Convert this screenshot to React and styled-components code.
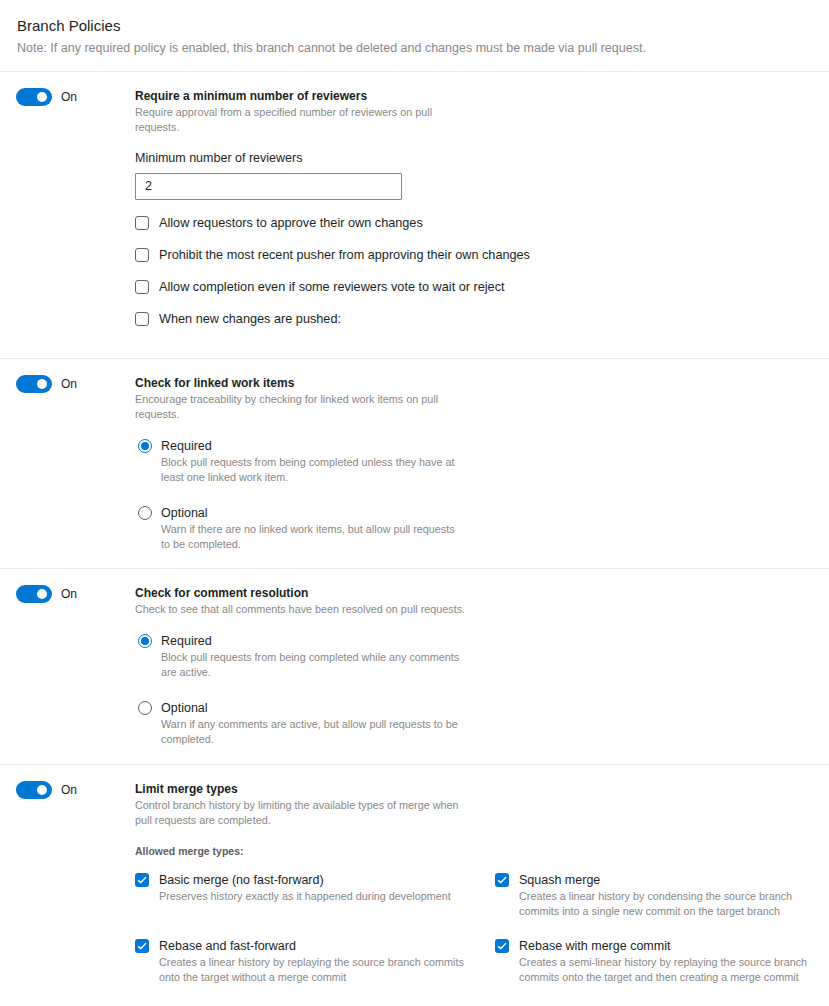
import React from 'react'
import styled, { createGlobalStyle } from 'styled-components'

const GlobalStyle = createGlobalStyle`
  body {
    margin: 0;
    background: #ffffff;
    font-family: "Liberation Sans", Arial, sans-serif;
    color: #323130;
  }
`

const Page = styled.div`
  width: 829px;
`

const Header = styled.div`
  padding: 16px 17px 14px;
  border-bottom: 1px solid #eaeaea;
`

const Title = styled.div`
  font-size: 15px;
  line-height: 20px;
  color: #201f1e;
`

const Note = styled.div`
  margin-top: 3px;
  font-size: 12.5px;
  line-height: 18px;
  color: #8a8886;
`

const Section = styled.div`
  display: flex;
  padding: 16px 0 ${p => p.bottom || 20}px;
  border-bottom: ${p => (p.last ? 'none' : '1px solid #eaeaea')};
`

const ToggleCol = styled.div`
  width: 135px;
  flex: none;
  padding-left: 16px;
  box-sizing: border-box;
  display: flex;
  align-items: flex-start;
  gap: 9px;
`

const Track = styled.div`
  width: 36px;
  height: 18px;
  border-radius: 9px;
  background: #0078d4;
  position: relative;
  flex: none;
  &::after {
    content: '';
    position: absolute;
    right: 5px;
    top: 4px;
    width: 10px;
    height: 10px;
    border-radius: 50%;
    background: #fff;
  }
`

const ToggleLabel = styled.span`
  font-size: 12px;
  line-height: 18px;
  color: #201f1e;
`

const Body = styled.div`
  flex: 1;
  min-width: 0;
`

const PolicyTitle = styled.div`
  font-size: 12px;
  font-weight: 700;
  line-height: 17px;
  color: #201f1e;
`

const Desc = styled.div`
  font-size: 10.8px;
  line-height: 15px;
  color: #8a8886;
  width: ${p => p.w || 320}px;
`

const FieldLabel = styled.div`
  margin-top: 14px;
  font-size: 12.5px;
  line-height: 18px;
  color: #201f1e;
`

const Input = styled.div`
  margin-top: 6px;
  width: 267px;
  height: 27px;
  box-sizing: border-box;
  border: 1px solid #8a8886;
  border-radius: 1px;
  padding: 0 9px;
  font-size: 12.5px;
  line-height: 25px;
  color: #201f1e;
`

const CheckList = styled.div`
  margin-top: 14px;
  display: flex;
  flex-direction: column;
  gap: 14px;
`

const CheckRow = styled.div`
  display: flex;
  align-items: center;
  gap: 10px;
  height: 18px;
  font-size: 12.7px;
  color: #201f1e;
`

const Box = styled.span`
  width: 14px;
  height: 14px;
  box-sizing: border-box;
  border-radius: 3px;
  flex: none;
  display: inline-flex;
  align-items: center;
  justify-content: center;
  margin-top: ${p => (p.checked ? '2px' : '0')};
  border: ${p => (p.checked ? 'none' : '1px solid #666462')};
  background: ${p => (p.checked ? '#0078d4' : '#fff')};
`

const RadioList = styled.div`
  margin-top: 15px;
  display: flex;
  flex-direction: column;
  gap: 19px;
  padding-left: 3px;
`

const RadioItem = styled.div`
  display: flex;
  gap: 9px;
`

const Radio = styled.span`
  width: 14px;
  height: 14px;
  margin-top: 2px;
  box-sizing: border-box;
  border-radius: 50%;
  flex: none;
  border: 1px solid ${p => (p.selected ? '#0078d4' : '#605e5c')};
  display: flex;
  align-items: center;
  justify-content: center;
  &::after {
    content: '';
    width: 8px;
    height: 8px;
    border-radius: 50%;
    background: ${p => (p.selected ? '#0078d4' : 'transparent')};
  }
`

const OptionLabel = styled.div`
  font-size: 12.5px;
  line-height: 18px;
  color: #201f1e;
`

const SubHeading = styled.div`
  margin-top: 16px;
  font-size: 10.5px;
  font-weight: 700;
  line-height: 14px;
  color: #605e5c;
`

const MergeGrid = styled.div`
  margin-top: 13px;
  display: grid;
  grid-template-columns: 360px 1fr;
  row-gap: 18px;
`

const MergeItem = styled.div`
  display: flex;
  gap: 10px;
`

const Check = () => (
  <svg width="10" height="8" viewBox="0 0 10 8">
    <path d="M1 4.2 L3.7 6.6 L9 1.2" fill="none" stroke="#fff" strokeWidth="1.4" />
  </svg>
)

const Toggle = () => (
  <ToggleCol>
    <Track />
    <ToggleLabel>On</ToggleLabel>
  </ToggleCol>
)

const RadioOption = ({ selected, label, desc }) => (
  <RadioItem>
    <Radio selected={selected} />
    <div>
      <OptionLabel>{label}</OptionLabel>
      <Desc w={305}>{desc}</Desc>
    </div>
  </RadioItem>
)

const merges = [
  ['Basic merge (no fast-forward)', 'Preserves history exactly as it happened during development', 312],
  ['Squash merge', 'Creates a linear history by condensing the source branch commits into a single new commit on the target branch', 300],
  ['Rebase and fast-forward', 'Creates a linear history by replaying the source branch commits onto the target without a merge commit', 312],
  ['Rebase with merge commit', 'Creates a semi-linear history by replaying the source branch commits onto the target and then creating a merge commit', 300],
]

const App = () => {
  return (
    <Page>
      <GlobalStyle />
      <Header>
        <Title>Branch Policies</Title>
        <Note>Note: If any required policy is enabled, this branch cannot be deleted and changes must be made via pull request.</Note>
      </Header>

      <Section bottom={30}>
        <Toggle />
        <Body>
          <PolicyTitle>Require a minimum number of reviewers</PolicyTitle>
          <Desc>Require approval from a specified number of reviewers on pull requests.</Desc>
          <FieldLabel>Minimum number of reviewers</FieldLabel>
          <Input>2</Input>
          <CheckList>
            <CheckRow><Box />Allow requestors to approve their own changes</CheckRow>
            <CheckRow><Box />Prohibit the most recent pusher from approving their own changes</CheckRow>
            <CheckRow><Box />Allow completion even if some reviewers vote to wait or reject</CheckRow>
            <CheckRow><Box />When new changes are pushed:</CheckRow>
          </CheckList>
        </Body>
      </Section>

      <Section bottom={16}>
        <Toggle />
        <Body>
          <PolicyTitle>Check for linked work items</PolicyTitle>
          <Desc>Encourage traceability by checking for linked work items on pull requests.</Desc>
          <RadioList>
            <RadioOption selected label="Required" desc="Block pull requests from being completed unless they have at least one linked work item." />
            <RadioOption label="Optional" desc="Warn if there are no linked work items, but allow pull requests to be completed." />
          </RadioList>
        </Body>
      </Section>

      <Section bottom={17}>
        <Toggle />
        <Body>
          <PolicyTitle>Check for comment resolution</PolicyTitle>
          <Desc w={340}>Check to see that all comments have been resolved on pull requests.</Desc>
          <RadioList>
            <RadioOption selected label="Required" desc="Block pull requests from being completed while any comments are active." />
            <RadioOption label="Optional" desc="Warn if any comments are active, but allow pull requests to be completed." />
          </RadioList>
        </Body>
      </Section>

      <Section last bottom={10}>
        <Toggle />
        <Body>
          <PolicyTitle>Limit merge types</PolicyTitle>
          <Desc w={360}>
            Control branch history by limiting the available types of merge when
            <br />
            pull requests are completed.
          </Desc>
          <SubHeading>Allowed merge types:</SubHeading>
          <MergeGrid>
            {merges.map(([label, desc, w]) => (
              <MergeItem key={label}>
                <Box checked><Check /></Box>
                <div>
                  <OptionLabel>{label}</OptionLabel>
                  <Desc w={w}>{desc}</Desc>
                </div>
              </MergeItem>
            ))}
          </MergeGrid>
        </Body>
      </Section>
    </Page>
  )
}

export default App
